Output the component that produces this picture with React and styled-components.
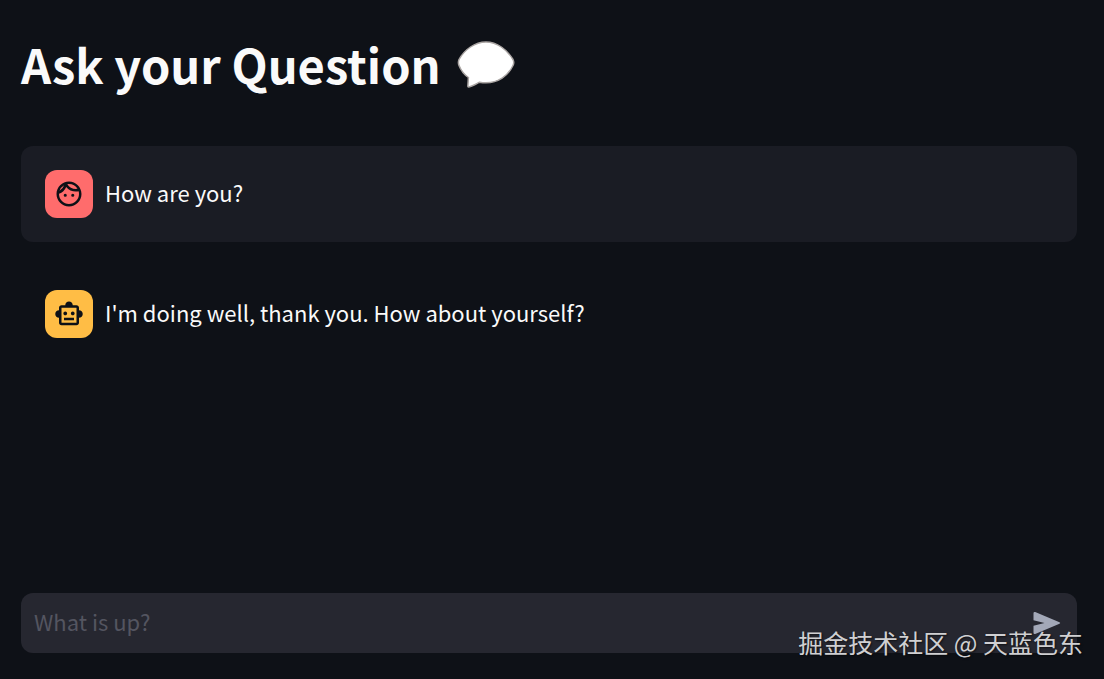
import React from "react";
import styled, { createGlobalStyle } from "styled-components";
import { MdOutlineFace, MdOutlineSmartToy } from "react-icons/md";

const GlobalStyle = createGlobalStyle`
  * { box-sizing: border-box; }
  body {
    margin: 0;
    background: #0e1117;
    color: #fafafa;
    font-family: "Noto Sans CJK SC", "Noto Sans", sans-serif;
  }
`;

const Page = styled.div`
  position: relative;
  min-height: 100vh;
  display: flex;
  flex-direction: column;
  padding: 32px 27px 26px 21px;
`;

const Title = styled.h1`
  display: flex;
  align-items: center;
  gap: 16px;
  margin: 0 0 50px;
  font-size: 47px;
  line-height: 64px;
  font-weight: 700;
`;

const BubbleIcon = styled.svg`
  width: 58px;
  height: 48px;
`;

const Messages = styled.main`
  flex: 1;
  display: flex;
  flex-direction: column;
  gap: 24px;
`;

const Message = styled.article`
  display: flex;
  align-items: center;
  gap: 12px;
  padding: 24px;
  border-radius: 12px;
  background: ${(p) => (p.$user ? "#1a1c24" : "transparent")};
`;

const Avatar = styled.div`
  display: flex;
  align-items: center;
  justify-content: center;
  flex: none;
  width: 48px;
  height: 48px;
  border-radius: 12px;
  background: ${(p) => (p.$user ? "#ff6c6c" : "#ffbd45")};
  color: #0e1117;
  font-size: 30px;
`;

const MessageText = styled.p`
  margin: 0;
  padding-bottom: 4px;
  font-size: 22px;
  line-height: 36px;
`;

const ChatForm = styled.form`
  display: flex;
  align-items: center;
  height: 60px;
  padding: 0 16px 0 13px;
  border-radius: 12px;
  background: #262730;
`;

const ChatInput = styled.input`
  flex: 1;
  min-width: 0;
  padding: 0 0 4px;
  border: 0;
  outline: 0;
  background: transparent;
  color: #fafafa;
  font-family: inherit;
  font-size: 22px;
  line-height: 36px;

  &::placeholder {
    color: #545560;
    opacity: 1;
  }
`;

const SendButton = styled.button`
  display: flex;
  padding: 0;
  border: 0;
  background: transparent;
  color: #a3a8b8;
`;

const SendIcon = styled.svg`
  width: 28px;
  height: 24px;
`;

const Credit = styled.div`
  position: absolute;
  right: 21px;
  bottom: 19px;
  color: #d0d0d2;
  font-size: 25px;
  line-height: 36px;
  text-shadow: 1px 1px 2px rgba(0, 0, 0, 0.6);
  white-space: nowrap;
  pointer-events: none;
`;

export default function App() {
  return (
    <Page>
      <GlobalStyle />
      <Title>
        Ask your Question
        <BubbleIcon viewBox="0 0 58 48" aria-hidden="true">
          <path
            d="M29 2C40 2 50 9.500 56 19.500Q57.500 22.500 56 25.500C51 36 41 42.800 29 42.800C26.500 42.800 24.500 42.600 22.500 42.200C19 44 15.500 46.200 11.800 47C10.900 47.100 10.800 46.500 10.900 45.500L11.400 37.500C7 34.500 3.800 30 2 25.500Q0.800 22.500 2 19.500C7.500 9.500 18 2 29 2Z"
            fill="#fff"
            stroke="#aaa5a3"
            strokeWidth="1.500"
          />
        </BubbleIcon>
      </Title>
      <Messages>
        <Message $user>
          <Avatar $user>
            <MdOutlineFace aria-hidden="true" />
          </Avatar>
          <MessageText>How are you?</MessageText>
        </Message>
        <Message>
          <Avatar>
            <MdOutlineSmartToy aria-hidden="true" />
          </Avatar>
          <MessageText>I'm doing well, thank you. How about yourself?</MessageText>
        </Message>
      </Messages>
      <ChatForm onSubmit={(e) => e.preventDefault()}>
        <ChatInput type="text" placeholder="What is up?" aria-label="Message" />
        <SendButton type="submit" aria-label="Send">
          <SendIcon viewBox="0 0 28 24" aria-hidden="true">
            <path
              d="M0.500 2.200Q0.500 0.500 2.200 1L26.500 11.200Q28 12 26.500 12.800L2.200 23Q0.500 23.500 0.500 21.800V14.800L11.500 12L0.500 9.200Z"
              fill="currentColor"
            />
          </SendIcon>
        </SendButton>
      </ChatForm>
      <Credit>掘金技术社区 @ 天蓝色东</Credit>
    </Page>
  );
}
